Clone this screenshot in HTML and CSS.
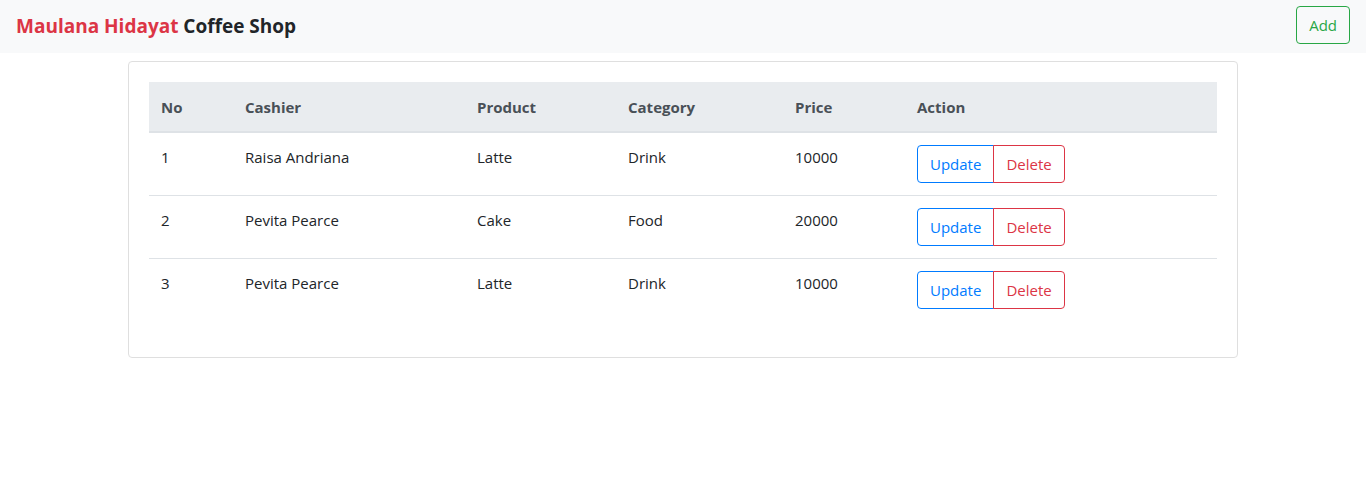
FILE: index.html
```html
<!DOCTYPE html>
<html lang="en">
<head>
<meta charset="utf-8">
<title>Maulana Hidayat Coffee Shop</title>
<link rel="stylesheet" href="styles.css">
</head>
<body>
<nav class="navbar">
  <a class="brand" href="#"><span class="brand-red">Maulana Hidayat</span> Coffee Shop</a>
  <button class="btn btn-success">Add</button>
</nav>
<div class="container">
  <div class="card">
    <div class="card-body">
      <table class="table">
        <thead>
          <tr>
            <th class="c-no">No</th>
            <th class="c-cashier">Cashier</th>
            <th class="c-product">Product</th>
            <th class="c-category">Category</th>
            <th class="c-price">Price</th>
            <th>Action</th>
          </tr>
        </thead>
        <tbody>
          <tr>
            <td>1</td><td>Raisa Andriana</td><td>Latte</td><td>Drink</td><td>10000</td>
            <td><div class="btn-group"><button class="btn btn-primary">Update</button><button class="btn btn-danger">Delete</button></div></td>
          </tr>
          <tr>
            <td>2</td><td>Pevita Pearce</td><td>Cake</td><td>Food</td><td>20000</td>
            <td><div class="btn-group"><button class="btn btn-primary">Update</button><button class="btn btn-danger">Delete</button></div></td>
          </tr>
          <tr>
            <td>3</td><td>Pevita Pearce</td><td>Latte</td><td>Drink</td><td>10000</td>
            <td><div class="btn-group"><button class="btn btn-primary">Update</button><button class="btn btn-danger">Delete</button></div></td>
          </tr>
        </tbody>
      </table>
    </div>
  </div>
</div>
</body>
</html>
```
FILE: styles.css
```css
* { box-sizing: border-box; }
body {
  margin: 0;
  font-family: "Open Sans", "Noto Sans", sans-serif;
  font-size: 15px;
  line-height: 24px;
  color: #212529;
  background: #fff;
}
.navbar {
  display: flex;
  justify-content: space-between;
  align-items: center;
  background: #f8f9fa;
  padding: 6px 16px 9px;
}
.brand {
  font-size: 19px;
  font-weight: 700;
  color: #212529;
  text-decoration: none;
  line-height: 30px;
  margin-top: 2px;
}
.brand-red { color: #dc3545; }
.btn {
  font-family: inherit;
  font-size: 15px;
  line-height: 24px;
  padding: 6px 12px;
  background: transparent;
  border: 1px solid;
  border-radius: 4px;
  cursor: pointer;
}
.btn-success { color: #28a745; border-color: #28a745; }
.btn-primary { color: #007bff; border-color: #007bff; }
.btn-danger { color: #dc3545; border-color: #dc3545; }
.container {
  width: 1110px;
  margin: 8px auto 0;
}
.card {
  border: 1px solid #dfdfdf;
  border-radius: 4px;
}
.card-body { padding: 20px; }
.table {
  width: 100%;
  border-collapse: collapse;
  margin-bottom: 16px;
}
.table th, .table td {
  text-align: left;
  vertical-align: top;
  padding: 12px;
}
.table thead th {
  background: #e9ecef;
  color: #495057;
  font-weight: 700;
  padding-top: 13px;
  border-bottom: 2px solid #dee2e6;
}
.table tbody td { border-top: 1px solid #dee2e6; }
.table tbody tr:first-child td { border-top: 0; }
.c-no { width: 84px; }
.c-cashier { width: 232px; }
.c-product { width: 151px; }
.c-category { width: 167px; }
.c-price { width: 122px; }
.btn-group { display: inline-flex; }
.btn-group .btn:first-child { border-top-right-radius: 0; border-bottom-right-radius: 0; }
.btn-group .btn:last-child { border-top-left-radius: 0; border-bottom-left-radius: 0; margin-left: -1px; }
```
